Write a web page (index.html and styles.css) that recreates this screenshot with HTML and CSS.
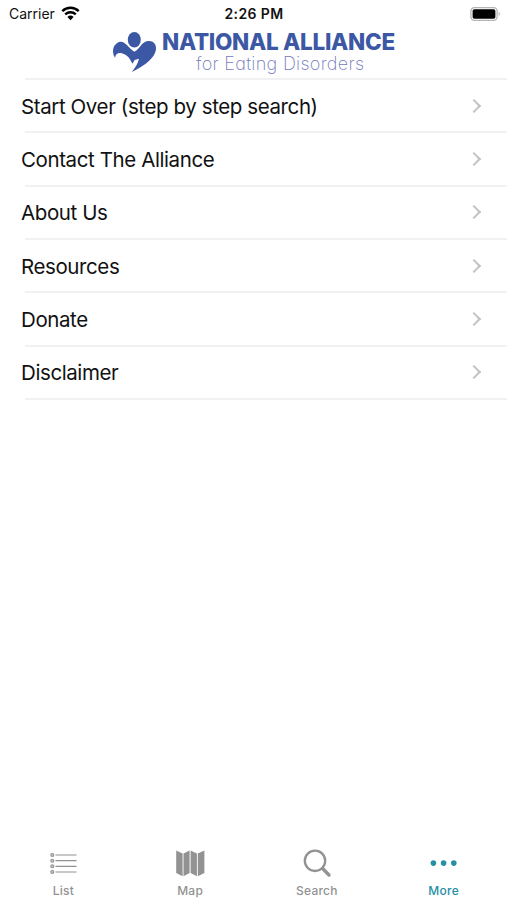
FILE: index.html
```
<!DOCTYPE html>
<html lang="en">
<head>
  <meta charset="UTF-8">
  <meta name="viewport" content="width=device-width, initial-scale=1.0">
  <title>More</title>
  <link rel="stylesheet" href="styles.css">
</head>
<body>

  <div class="app">
    <div class="status-bar">
      <div class="carrier">
        <span>Carrier</span>
        <svg width="19" height="15" viewBox="0 0 19 15">
          <path d="M1.3 5.2 C6 .7 13 .7 17.7 5.2" fill="none" stroke="#000" stroke-width="2.5"/>
          <path d="M4.2 8.4 C7.2 5.5 11.8 5.5 14.8 8.4" fill="none" stroke="#000" stroke-width="2.3"/>
          <path d="M6.4 11 Q9.5 8.2 12.6 11 L9.5 14.2 Z"/>
        </svg>
      </div>
      <div class="time">2:26 PM</div>
      <div class="battery">
        <svg width="31" height="14" viewBox="0 0 31 14">
          <rect x=".9" y=".7" width="26.2" height="12.6" rx="3.6" fill="#fff" stroke="#b4b4b4" stroke-width="1.3"/>
          <rect x="2.6" y="2.3" width="22.8" height="9.4" rx="1.8"/>
          <path d="M28.7 4.8 Q31.2 7 28.7 9.2 Z" fill="#b4b4b4"/>
        </svg>
      </div>
    </div>

    <header class="logo">
      <svg width="45" height="42" viewBox="0 0 45 42" fill="#3c58a5">
        <ellipse cx="22.3" cy="8.7" rx="6.5" ry="7.7"/>
        <path d="M3 26.8 C-.2 22.5 .2 14 6.5 11.2 C12.5 8.8 16 16.5 22.3 20.8 C28.5 17.5 29.5 10 37 10 C43.5 10 45.5 16.5 43 22 C39.8 29.5 31 35.5 19.7 41 C22.5 37.6 26 33 27 27.7 L22.6 29 L20.5 32.8 C18.5 29.5 17.3 26 13 23.6 C8.5 21.2 4 21.2 3 26.8 Z"/>
      </svg>
      <div class="logo-text">
        <div class="logo-name">NATIONAL ALLIANCE</div>
        <div class="logo-sub">for Eating Disorders</div>
      </div>
    </header>

    <ul class="menu">
      <li><span>Start Over (step by step search)</span><i class="chevron"></i></li>
      <li><span>Contact The Alliance</span><i class="chevron"></i></li>
      <li><span>About Us</span><i class="chevron"></i></li>
      <li><span>Resources</span><i class="chevron"></i></li>
      <li><span>Donate</span><i class="chevron"></i></li>
      <li><span>Disclaimer</span><i class="chevron"></i></li>
    </ul>

    <nav class="tabs">
      <div class="tab">
        <svg width="32" height="32" viewBox="0 0 32 32" fill="none" stroke="#929292">
          <path d="M8.5 8H29.5M8.5 13.7H29.5M8.5 19.3H29.5M8.5 25H29.5" stroke-width="1.2"/>
          <g fill="#c4c4c4" stroke-width="1.1">
            <circle cx="5.3" cy="8" r="1.5"/>
            <circle cx="5.3" cy="13.7" r="1.5"/>
            <circle cx="5.3" cy="19.3" r="1.5"/>
            <circle cx="5.3" cy="25" r="1.5"/>
          </g>
        </svg>
        <span>List</span>
      </div>
      <div class="tab">
        <svg width="32" height="32" viewBox="0 0 32 32" fill="#929292">
          <path d="M2.2 3.4 L8.6 6.4 V29.2 L2.2 26 Z"/>
          <path d="M9.5 6.4 L15.6 3.4 V26 L9.5 29.2 Z"/>
          <path d="M16.6 3.4 L22.9 6.4 V29.2 L16.6 26 Z"/>
          <path d="M23.8 6.4 L30.4 3.4 V26 L23.8 29.2 Z"/>
        </svg>
        <span>Map</span>
      </div>
      <div class="tab">
        <svg width="32" height="32" viewBox="0 0 32 32" fill="none" stroke="#929292">
          <circle cx="14" cy="13.8" r="10.2" stroke-width="2.3"/>
          <path d="M21.6 21.5 L28 28" stroke-width="3.3" stroke-linecap="round"/>
        </svg>
        <span>Search</span>
      </div>
      <div class="tab active">
        <svg width="32" height="32" viewBox="0 0 32 32" fill="#258fa5">
          <circle cx="5.4" cy="16.1" r="2.8"/>
          <circle cx="15.6" cy="16.1" r="2.8"/>
          <circle cx="25.8" cy="16.1" r="2.8"/>
        </svg>
        <span>More</span>
      </div>
    </nav>
  </div>

</body>
</html>
```
FILE: styles.css
```
body {
  margin: 0;
  background-color: #fff;
  color: #111;
  font-family: 'Inter', sans-serif;
}

svg {
  display: block;
}

.app {
  display: flex;
  flex-direction: column;
  height: 100vh;
}

.status-bar {
  display: grid;
  grid-template-columns: 1fr auto 1fr;
  align-items: center;
  height: 27px;
  padding: 0 6px 0 9px;
  font-size: 14px;
}

.carrier {
  display: flex;
  align-items: center;
  gap: 6px;
}

.time {
  padding-right: 2px;
  font-weight: 600;
  letter-spacing: 0.4px;
}

.battery {
  justify-self: end;
}

.logo {
  display: flex;
  gap: 5px;
  height: 47px;
  padding: 4px 0 0 112px;
}

.logo-text {
  white-space: nowrap;
  color: #3c58a5;
}

.logo-name {
  font-size: 22.5px;
  font-weight: 800;
  line-height: 22px;
  letter-spacing: -0.3px;
}

/* cv11 is the single-storey a */
.logo-sub {
  padding-left: 34px;
  font-size: 18px;
  font-weight: 200;
  line-height: 21px;
  letter-spacing: 0.3px;
  font-feature-settings: "cv11";
  color: #7379bc;
}

.menu {
  flex: 1;
  margin: 0;
  padding: 0;
  list-style: none;
}

.menu li {
  display: flex;
  align-items: center;
  justify-content: space-between;
  box-sizing: border-box;
  height: 53.33px;
  padding: 2px 28px 0 21px;
  font-size: 20.5px;
  letter-spacing: -0.4px;
  background: linear-gradient(#f1f1f1, #f1f1f1) 25px 0 / 100% 2px no-repeat;
}

.menu li span {
  padding-top: 1px;
}

.menu li:last-child {
  height: 55px;
  padding-bottom: 2px;
  background: linear-gradient(#f1f1f1, #f1f1f1) 25px 0 / 100% 2px no-repeat,
    linear-gradient(#f1f1f1, #f1f1f1) 25px 100% / 100% 2px no-repeat;
}

.chevron {
  width: 8px;
  height: 8px;
  border-top: 2px solid #c2c2c4;
  border-right: 2px solid #c2c2c4;
  transform: rotate(45deg);
}

.tabs {
  display: flex;
  height: 53px;
}

.tab {
  flex: 1;
  display: flex;
  flex-direction: column;
  align-items: center;
  color: #929292;
  font-size: 12px;
  font-weight: 500;
  line-height: 15px;
  letter-spacing: 0.25px;
}

.tab span {
  margin-top: 4px;
}

.active {
  color: #258fa5;
}
```
